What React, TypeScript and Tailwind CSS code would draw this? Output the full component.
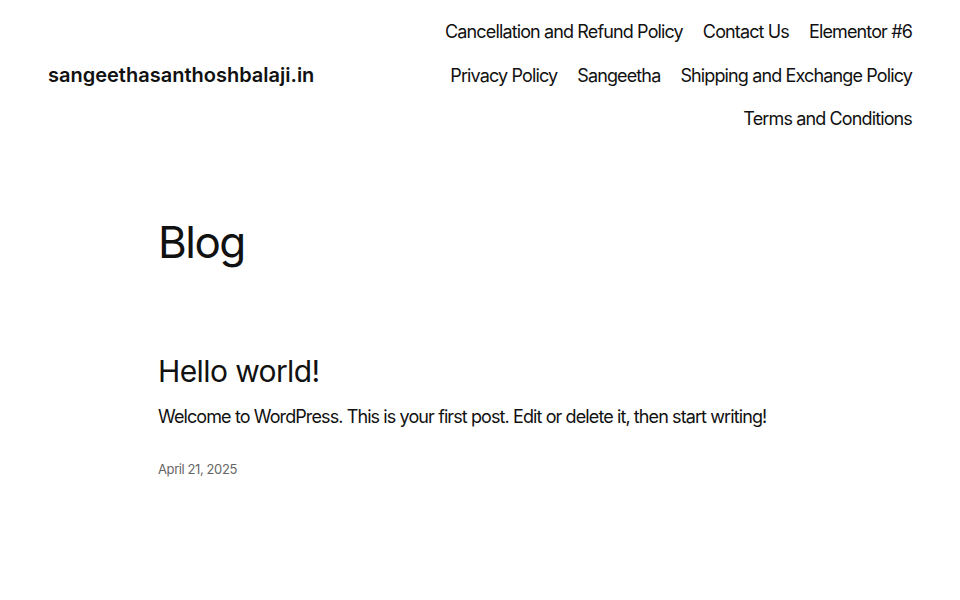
import React from "react";

const navItems = [
  "Cancellation and Refund Policy",
  "Contact Us",
  "Elementor #6",
  "Privacy Policy",
  "Sangeetha",
  "Shipping and Exchange Policy",
  "Terms and Conditions",
];

export default function App() {
  return (
    <div
      className="min-h-[600px] w-full bg-white text-[#111111]"
      style={{ fontFamily: "Inter, 'Noto Sans', sans-serif" }}
    >
      <header className="flex items-center justify-between px-[48px] pt-[18px] pb-[14px]">
        <div className="text-[20px] font-semibold tracking-[0px]">sangeethasanthoshbalaji.in</div>
        <nav className="flex max-w-[480px] flex-wrap justify-end gap-x-[20px] gap-y-[16.5px]">
          {navItems.map((item) => (
            <a key={item} className="text-[18px] leading-[27px] tracking-[-0.87px]">
              {item}
            </a>
          ))}
        </nav>
      </header>
      <main className="mx-auto w-[644px] pt-[70px]">
        <h1 className="text-[44px] leading-[1.2] tracking-[-1.5px]">Blog</h1>
        <article className="pt-[83px]">
          <h2 className="text-[30px] leading-[1.3] tracking-[-0.6px]">Hello world!</h2>
          <p className="mt-[12px] text-[18px] leading-[27px] tracking-[-0.9px]">
            Welcome to WordPress. This is your first post. Edit or delete it, then start writing!
          </p>
          <div className="mt-[29px] text-[13px] leading-[20px] tracking-[-0.4px] text-[#666666]">
            April 21, 2025
          </div>
        </article>
      </main>
    </div>
  );
}
